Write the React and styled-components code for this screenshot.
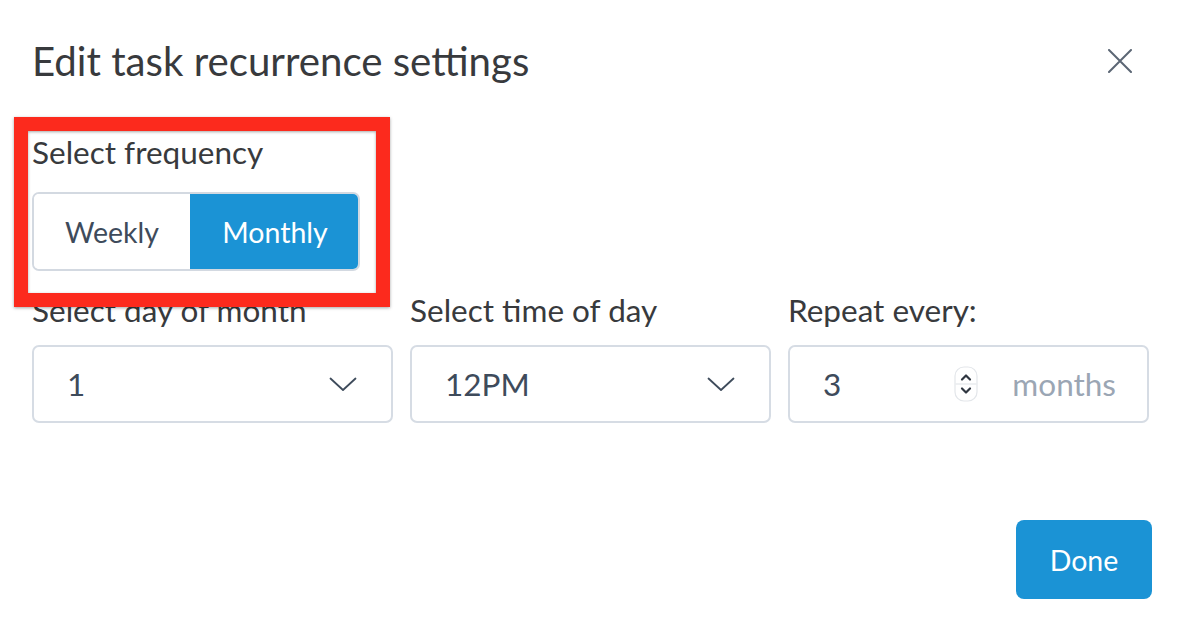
import React from "react";
import styled, { createGlobalStyle } from "styled-components";

const Global = createGlobalStyle`
  html, body { margin: 0; padding: 0; background: #ffffff; }
  body { font-family: Lato, "Open Sans", sans-serif; }
  * { box-sizing: border-box; }
`;

const Page = styled.div`
  position: relative;
  width: 1188px;
  height: 638px;
  padding: 0 36px 0 32px;
  display: flex;
  flex-direction: column;
  overflow: hidden;
`;

const Header = styled.div`
  display: flex;
  align-items: center;
  justify-content: space-between;
  height: 47px;
  margin-top: 37px;
  padding-right: 20px;
`;

const Title = styled.h1`
  margin: 0;
  font-weight: 400;
  font-size: 40.2px;
  line-height: 47px;
  color: #383a3d;
`;

const CloseButton = styled.button`
  border: 0;
  background: none;
  padding: 0;
  width: 24px;
  height: 24px;
  display: flex;
  color: #5b6674;
`;

const Section = styled.div`
  display: flex;
  flex-direction: column;
  margin-top: 50px;
`;

const Label = styled.div`
  font-size: 31.5px;
  color: #383a3d;
  line-height: 37px;
  margin-bottom: ${(p) => p.$gap}px;
  white-space: nowrap;
`;

const Segmented = styled.div`
  display: flex;
  width: 328px;
  height: 79px;
  border: 2px solid #d3d9e1;
  border-radius: 7px;
  overflow: hidden;
`;

const Segment = styled.div`
  flex: ${(p) => p.$flex};
  display: flex;
  align-items: center;
  justify-content: center;
  font-size: 28.5px;
  color: ${(p) => (p.$active ? "#ffffff" : "#3e4b5b")};
  background: ${(p) => (p.$active ? "#1b93d5" : "#ffffff")};
  margin: ${(p) => (p.$active ? "-2px -2px -2px 0" : "0")};
`;

const FieldRow = styled.div`
  display: grid;
  grid-template-columns: repeat(3, 361px);
  column-gap: 17px;
  margin-top: 21px;
`;

const Field = styled.div`
  display: flex;
  flex-direction: column;
`;

const Box = styled.div`
  height: 78px;
  border: 2px solid #d6dce4;
  border-radius: 7px;
  display: flex;
  align-items: center;
  padding: 0 34px 0 33px;
  font-size: 31.5px;
  color: #3e4b5b;
`;

const Value = styled.span`
  flex: 1;
`;

const Unit = styled.span`
  color: #9ba6b4;
  margin-left: 34px;
  margin-right: -3px;
`;

const Footer = styled.div`
  display: flex;
  justify-content: flex-end;
  margin-top: 97px;
`;

const DoneButton = styled.button`
  width: 136px;
  height: 79px;
  border: 0;
  border-radius: 8px;
  background: #1b93d5;
  color: #ffffff;
  font-family: Lato, sans-serif;
  font-size: 28.5px;
  padding: 0;
`;

const Highlight = styled.div`
  position: absolute;
  left: 14px;
  top: 117px;
  width: 376px;
  height: 190px;
  border: 14px solid #fc2a1d;
  box-shadow: 0 1px 3px rgba(0, 0, 0, 0.35), inset 0 1px 3px rgba(0, 0, 0, 0.35);
  pointer-events: none;
`;

const Chevron = () => (
  <svg width="28" height="15" viewBox="0 0 28 15" fill="none">
    <path d="M1.5 1.5 L14 13 L26.5 1.5" stroke="#3e4b5b" strokeWidth="1.8" strokeLinecap="round" strokeLinejoin="round" />
  </svg>
);

const Spinner = () => (
  <svg width="24" height="36" viewBox="0 0 24 36" fill="none">
    <rect x="1" y="1" width="22" height="34" rx="9" fill="#ffffff" stroke="#e3e6ea" strokeWidth="1.2" />
    <line x1="1.5" y1="18" x2="22.5" y2="18" stroke="#e3e6ea" strokeWidth="1.2" />
    <path d="M8 13.5 L12 9.5 L16 13.5" stroke="#2f3640" strokeWidth="2.2" strokeLinecap="round" strokeLinejoin="round" />
    <path d="M8 22.5 L12 26.5 L16 22.5" stroke="#2f3640" strokeWidth="2.2" strokeLinecap="round" strokeLinejoin="round" />
  </svg>
);

const CloseIcon = () => (
  <svg width="24" height="24" viewBox="0 0 24 24" fill="none">
    <path d="M1 1 L23 23 M23 1 L1 23" stroke="currentColor" strokeWidth="2" strokeLinecap="round" />
  </svg>
);

export default function App() {
  return (
    <>
      <Global />
      <Page>
        <Header>
          <Title>Edit task recurrence settings</Title>
          <CloseButton aria-label="Close">
            <CloseIcon />
          </CloseButton>
        </Header>
        <Section>
          <Label $gap={21}>Select frequency</Label>
          <Segmented>
            <Segment $flex="0 0 156px">Weekly</Segment>
            <Segment $flex="1" $active>
              Monthly
            </Segment>
          </Segmented>
        </Section>
        <FieldRow>
          <Field>
            <Label $gap={16}>Select day of month</Label>
            <Box>
              <Value>1</Value>
              <Chevron />
            </Box>
          </Field>
          <Field>
            <Label $gap={16}>Select time of day</Label>
            <Box>
              <Value>12PM</Value>
              <Chevron />
            </Box>
          </Field>
          <Field>
            <Label $gap={16}>Repeat every:</Label>
            <Box>
              <Value>3</Value>
              <Spinner />
              <Unit>months</Unit>
            </Box>
          </Field>
        </FieldRow>
        <Footer>
          <DoneButton>Done</DoneButton>
        </Footer>
        <Highlight />
      </Page>
    </>
  );
}
